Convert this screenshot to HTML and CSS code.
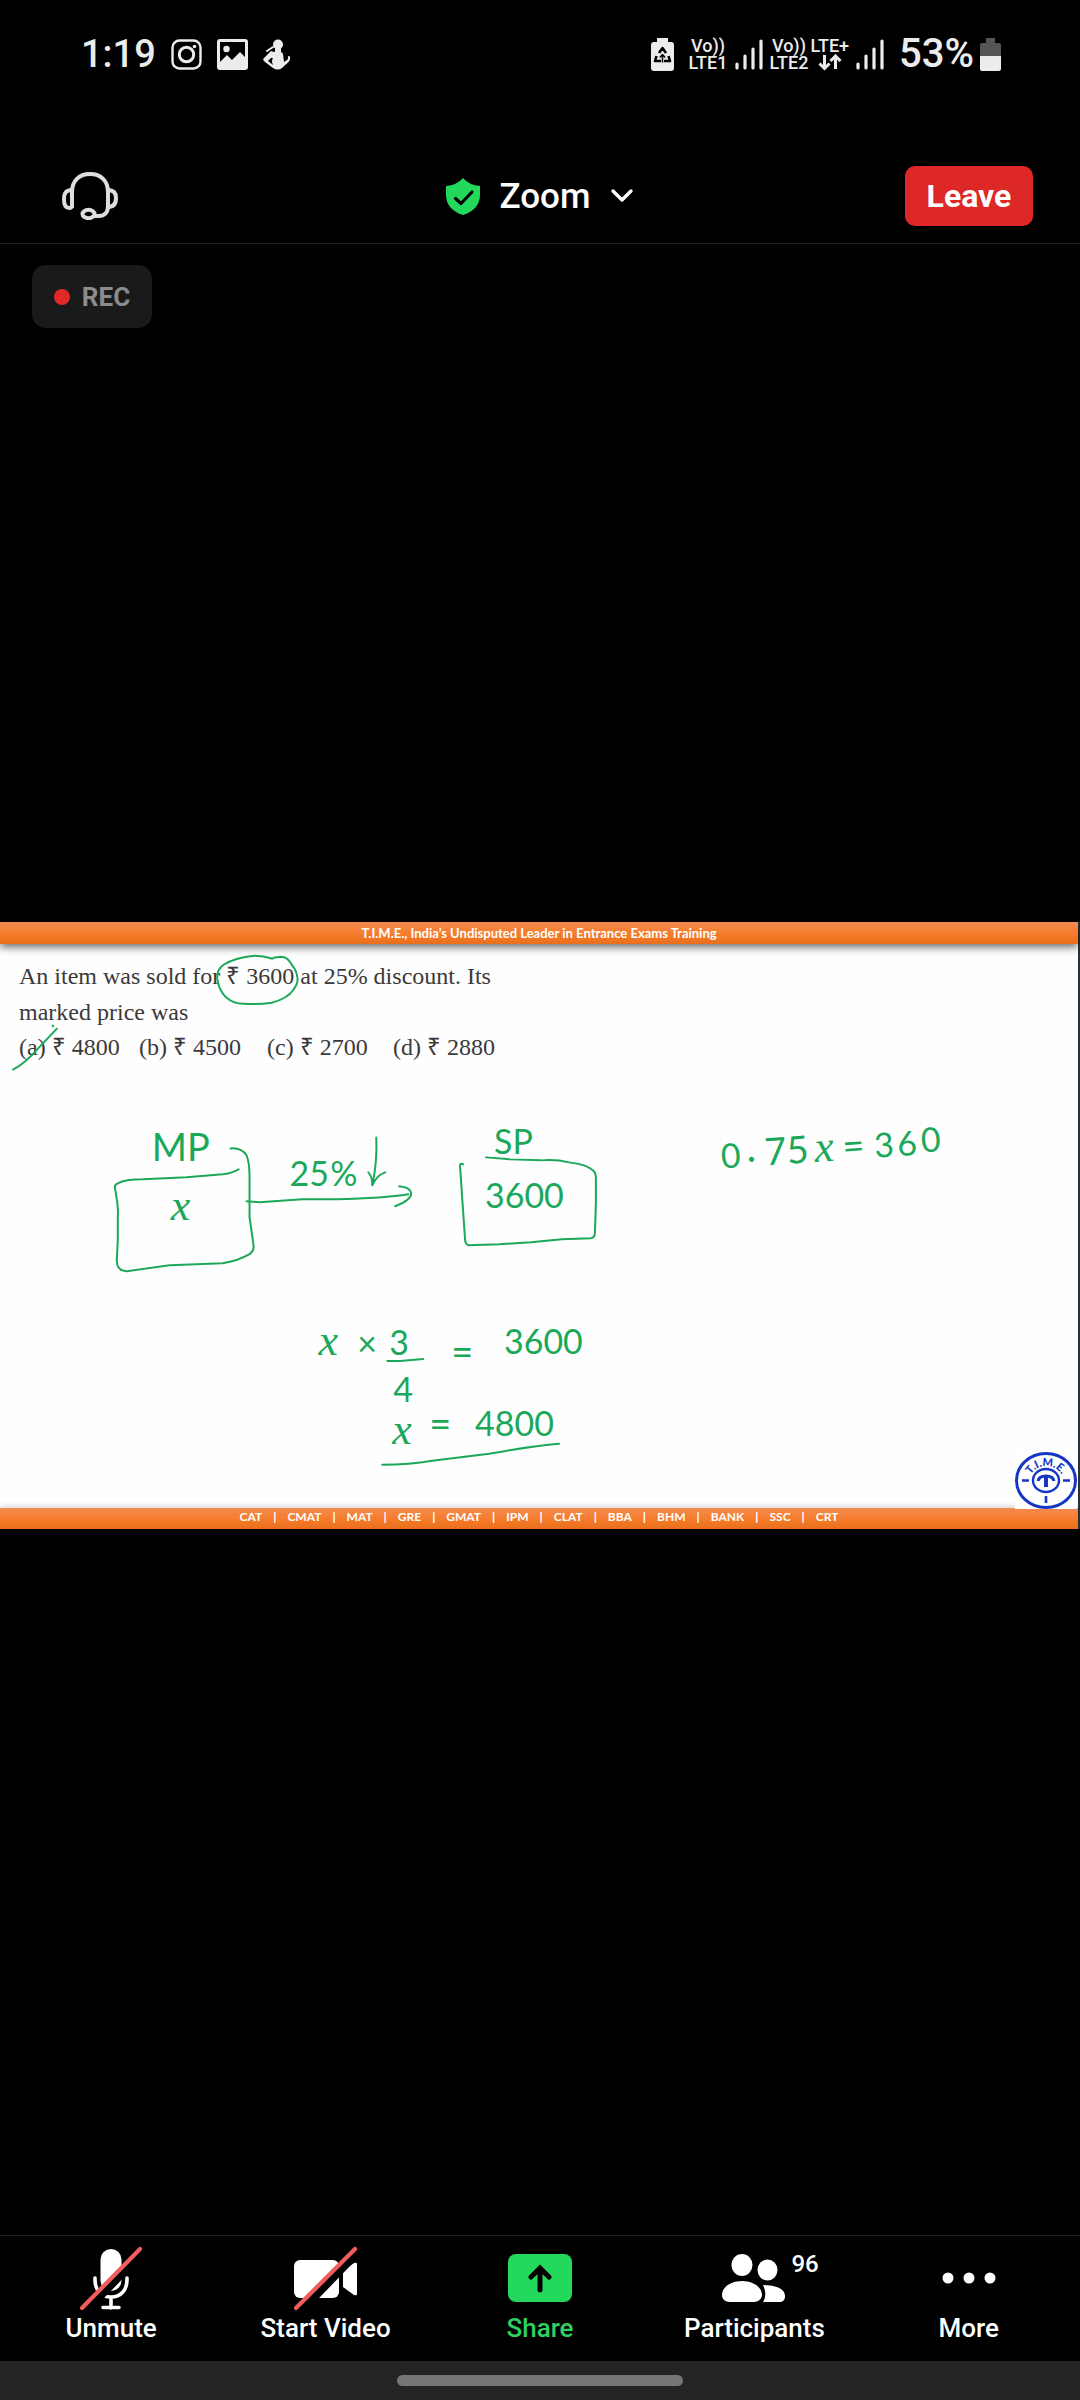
FILE: index.html
```html
<!DOCTYPE html>
<html lang="en">
<head>
<meta charset="utf-8">
<meta name="viewport" content="width=device-width, initial-scale=1">
<title>Zoom</title>
<link rel="stylesheet" href="styles.css">
</head>
<body>
<div class="status">
  <div class="status-left">
    <span class="clock">1:19</span>
    <svg class="note-icon" width="31" height="31" viewBox="0 0 31 31" fill="none" stroke="#ececec"><rect x="1.5" y="1.5" width="28" height="28" rx="7" stroke-width="2.4"/><circle cx="15.500" cy="15.500" r="7.200" stroke-width="3"/><circle cx="23.500" cy="7.500" r="1.800" fill="#ececec" stroke="none"/></svg>
    <svg class="note-icon" width="31" height="31" viewBox="0 0 31 31"><rect x="1.500" y="1.500" width="28" height="28" rx="1.500" fill="none" stroke="#ececec" stroke-width="3"/><circle cx="9.500" cy="10" r="3.200" fill="#ececec"/><path d="M2 24 10 16l5 5 8-8 7 7v10H2z" fill="#ececec"/></svg>
    <svg class="note-icon" width="28" height="31" viewBox="0 0 28 31" fill="#ececec"><circle cx="15" cy="5.500" r="5"/><path d="M12 9h6v5h-6z"/><path fill-rule="evenodd" d="M11 13q7-2 9 2l1 8 6-4-1 3-7 7q-4 3-9 0l-8-6q-3-2-1-4l7-7zM8 19l-3 3 5 4q-2-4 0-7z"/><path d="M4 12 10 8M20 26q7-4 6-8" stroke="#ececec" stroke-width="2" stroke-linecap="round" fill="none"/></svg>
  </div>
  <div class="status-right">
    <svg class="saver" width="23" height="33" viewBox="0 0 23 33"><path d="M6 0h11v4h3q3 0 3 3v23q0 3-3 3H3q-3 0-3-3V7q0-3 3-3h3z" fill="#ececec"/><path d="M8 15l3.500-5 3.500 5M5.500 18 4 23h6M17.500 18l1.500 5h-6" fill="none" stroke="#000" stroke-width="2.600" stroke-linejoin="round"/><path d="M11.500 16.500v8M8.800 19.500l2.700-3 2.700 3" stroke="#000" stroke-width="1.500" fill="none"/></svg>
    <div class="stack"><span>Vo))</span><span>LTE1</span></div>
    <svg class="signal" width="28" height="31" viewBox="0 0 28 31" stroke="#ececec" stroke-width="3.200" stroke-linecap="round"><path d="M2 25v4M10 17v12M18 10v19M26 2v27"/></svg>
    <div class="stack"><span>Vo))</span><span>LTE2</span></div>
    <div class="stack stack-next"><span>LTE+</span><svg width="24" height="17" viewBox="0 0 24 17" fill="none" stroke="#ececec" stroke-width="3"><path d="M6.500 1v13M1.500 9.500l5 5 5-5M17.500 15V2M12.500 7l5-5 5 5"/></svg></div>
    <svg class="signal" width="28" height="31" viewBox="0 0 28 31" stroke="#ececec" stroke-width="3.200" stroke-linecap="round"><path d="M2 25v4M10 17v12M18 10v19M26 2v27"/></svg>
    <span class="percent">53%</span>
    <svg width="21" height="33" viewBox="0 0 21 33"><path d="M6 0h9v5h4q2 0 2 2v11H0V7q0-2 2-2h4z" fill="#555"/><path d="M0 18h21v13q0 2-2 2H2q-2 0-2-2z" fill="#ececec"/></svg>
  </div>
</div>
<header class="bar">
  <button class="plain audio" aria-label="Audio"><svg width="56" height="48" viewBox="0 0 56 48" fill="none" stroke="#dedede" stroke-width="4"><path d="M10 36V20C10 9 17 2 28 2s18 7 18 18v14c0 7-4 10-9 10h-5"/><path d="M10 18C4 18 2 21 2 27s2 9 5 9 3-1 3-3M46 18c6 0 8 3 8 8s-2 9-8 9"/><ellipse cx="26.500" cy="42" rx="6" ry="4.200"/></svg></button>
  <button class="plain meeting">
    <svg width="34" height="37" viewBox="0 0 34 37"><path d="M17 0q6 7 17 8v9c0 10-7 17-17 20C7 34 0 27 0 17V8q11-1 17-8z" fill="#23d95b"/><path d="M9.500 20.500l5.500 5L26 14" fill="none" stroke="#000" stroke-width="3.200" stroke-linecap="round" stroke-linejoin="round"/></svg>
    <span>Zoom</span>
    <svg width="24" height="16" viewBox="0 0 24 16"><path d="M3 3l9 9 9-9" fill="none" stroke="#fff" stroke-width="3.400" stroke-linecap="round" stroke-linejoin="round"/></svg>
  </button>
  <button class="leave">Leave</button>
</header>
<main class="stage">
  <div class="rec"><i class="rec-dot"></i>REC</div>
  <section class="slide">
    <div class="slide-head">T.I.M.E., India’s Undisputed Leader in Entrance Exams Training</div>
    <div class="question">
      <p>An item was sold for ₹ 3600 at 25% discount. Its<br>marked price was</p>
      <div class="options"><span>(a) ₹ 4800</span><span>(b) ₹ 4500</span><span>(c) ₹ 2700</span><span>(d) ₹ 2880</span></div>
    </div>
    <div class="slide-foot"><span>CAT</span><b>|</b><span>CMAT</span><b>|</b><span>MAT</span><b>|</b><span>GRE</span><b>|</b><span>GMAT</span><b>|</b><span>IPM</span><b>|</b><span>CLAT</span><b>|</b><span>BBA</span><b>|</b><span>BHM</span><b>|</b><span>BANK</span><b>|</b><span>SSC</span><b>|</b><span>CRT</span></div>
    <svg class="logo" width="62" height="57" viewBox="0 0 62 57">
      <defs><path id="arc" d="M14 29A17 15 0 0 1 48 29"/></defs>
      <rect width="62" height="57" fill="#fff"/>
      <g fill="none" stroke="#1537c4"><ellipse cx="31" cy="28.500" rx="29.500" ry="27" stroke-width="3"/><ellipse cx="31" cy="28.500" rx="13" ry="11.500" stroke-width="2.400"/><path d="M7 28.500h7M48 28.500h7M31 44v7" stroke-width="2.600"/><path d="M23 29q1-5 8-5t8 5" stroke-width="3"/><path d="M31 24v11" stroke-width="4"/></g>
      <text class="logo-text"><textPath href="#arc" startOffset="50%" text-anchor="middle">T.I.M.E.</textPath></text>
    </svg>
    <svg class="ink" viewBox="0 0 1080 607">
      <g class="stroke">
        <path d="M273 36Q264 33 255 33 235 35 224 42 216 48 218 58 220 69 227 75 234 81 244 81 260 82 272 80 288 76 294 67 299 60 298 55 297 48 293 43 288 34 282 34L274 35"/>
        <path d="M57 106 38 126Q25 141 13 147M53 103v1"/>
        <path d="M239 247Q232 251 223 252L187 255 143 257Q125 257 118 261 115 262 115 265 119 285 118 295V318L117 338Q117 349 127 349L170 343 223 341Q238 339 250 332 255 328 254 323L250 295V255Q250 240 247 233 242 225 231 226"/>
        <path d="M247 279 260 280 303 277 337 277Q385 276 409 272M400 264Q411 265 412 271 412 278 396 284"/>
        <path d="M377 215Q378 240 373 263M369 250Q373 254 373 263 378 252 386 250"/>
        <path d="M487 235 511 237 542 238Q558 237 570 240 588 242 594 248 597 250 597 256V281L596 311Q596 315 592 316L563 317 532 320 500 322 469 323Q466 321 466 318L463 275 461 245Q460 240 464 242"/>
        <path d="M388 439 401 439 424 437M383 543Q410 543 433 539L490 532Q535 524 560 522"/>
      </g>
      <g class="hand">
        <text class="tall" x="152" y="239">MP</text><text class="unknown" x="171" y="298">x</text>
        <text x="290" y="264">25</text><text x="331" y="264">%</text>
        <text x="495" y="232">SP</text><text x="486" y="286">3600</text>
        <g transform="rotate(-4 725 246)"><text x="723" y="246">0</text><text x="749" y="249">·</text><text class="tall" x="767" y="246">75</text><text class="unknown" x="817" y="246">x</text><text class="tall" x="845" y="246">=</text><text x="877" y="246">3</text><text x="900" y="246">6</text><text x="924" y="244">0</text></g>
        <text class="unknown" x="319" y="433">x</text><text x="358" y="434">×</text><text x="390" y="433">3</text><text x="394" y="480">4</text>
        <text class="tall" x="452" y="444">=</text><text x="505" y="432">3600</text>
        <text class="unknown" x="393" y="522">x</text><text class="tall" x="430" y="516">=</text><text x="476" y="514">4800</text>
      </g>
    </svg>
  </section>
</main>
<nav class="tools">
  <button class="tool"><span class="pic"><svg width="64" height="64" viewBox="0 0 64 64"><g fill="none" stroke="#fff" stroke-width="3.600" stroke-linecap="round"><path d="M16 32v2c0 10 6 17 16 17s16-7 16-17v-2M32 51v11M24 61.500h16"/></g><rect x="21.500" y="3" width="21" height="42" rx="10.500" fill="#fff"/><path d="M6 66 64 6" stroke="#000" stroke-width="8"/><path d="M3 62 61 3" stroke="#f05d5b" stroke-width="4.200" stroke-linecap="round"/></svg></span>Unmute</button>
  <button class="tool"><span class="pic"><svg width="64" height="64" viewBox="0 0 64 64"><rect y="14" width="45" height="38" rx="6" fill="#fff"/><path d="M49 25 60 17q3-1 3 1v30q0 2-3 1l-11-8z" fill="#fff"/><path d="M6 66 64 6" stroke="#000" stroke-width="8"/><path d="M2 62 61 3" stroke="#f05d5b" stroke-width="4.200" stroke-linecap="round"/></svg></span>Start Video</button>
  <button class="tool share"><span class="pic"><svg width="64" height="48" viewBox="0 0 64 48"><rect width="64" height="48" rx="8" fill="#23d95b"/><path d="M32 36V15M23 23l9-9 9 9" fill="none" stroke="#000" stroke-width="5" stroke-linecap="round"/></svg></span>Share</button>
  <button class="tool"><span class="pic"><svg width="64" height="48" viewBox="0 0 64 48" fill="#fff"><ellipse cx="20" cy="11" rx="10.500" ry="11"/><ellipse cx="45.500" cy="16" rx="10" ry="10.500"/><path d="M20 27c11 0 20 6 20 14 0 4-4 7-8 7H8c-5 0-8-3-8-7 0-8 9-14 20-14zM41 31c13 0 22 4 22 11 0 4-2 6-6 6H41c3-5 3-11 0-17z"/></svg><span class="count">96</span></span>Participants</button>
  <button class="tool"><span class="pic"><svg width="54" height="12" viewBox="0 0 54 12" fill="#fff"><circle cx="6" cy="6" r="5.500"/><circle cx="27" cy="6" r="5.500"/><circle cx="48" cy="6" r="5.500"/></svg></span>More</button>
</nav>
<div class="gesture"><span class="handle"></span></div>
</body>
</html>
```
FILE: styles.css
```css
* { box-sizing: border-box; }
body {
  margin: 0;
  min-height: 100vh;
  display: flex;
  flex-direction: column;
  background: #000;
  color: #fff;
  font-family: Roboto, "Noto Sans", sans-serif;
}
svg { display: block; flex: none; }
button { font: inherit; color: inherit; border: 0; padding: 0; cursor: pointer; }
.plain { background: none; }

.status {
  height: 108px;
  padding: 0 79px 0 81px;
  display: flex;
  align-items: center;
  justify-content: space-between;
  color: #ececec;
  font-weight: 500;
}
.status-left, .status-right { display: flex; align-items: center; }
.status-left { gap: 15px; }
.clock, .percent { font-size: 40px; line-height: 48px; }
.clock { font-size: 38px; }
.stack {
  display: flex;
  flex-direction: column;
  align-items: center;
  font-size: 18px;
  line-height: 17px;
}
.stack-next { margin-left: 2px; }
.saver { margin-right: 15px; }
.signal { margin: 0 7px; }
.percent { margin: 0 6px 0 8px; }

.bar {
  height: 136px;
  padding: 41px 47px 0 62px;
  border-bottom: 1px solid #1f1f1f;
  display: grid;
  grid-template-columns: 1fr auto 1fr;
  align-items: center;
}
.audio { justify-self: start; }
.meeting {
  display: flex;
  align-items: center;
  gap: 20px;
  margin-right: 15px;
  font-size: 35px;
  font-weight: 500;
}
.leave {
  justify-self: end;
  width: 128px;
  height: 60px;
  border-radius: 10px;
  background: #de2828;
  font-size: 32px;
  font-weight: 700;
}

.stage {
  flex: 1;
  position: relative;
  display: flex;
  align-items: center;
  padding-bottom: 28px;
}
.rec {
  position: absolute;
  left: 32px;
  top: 21px;
  width: 120px;
  height: 63px;
  border-radius: 14px;
  background: #1a1a1a;
  color: #8c8c8c;
  display: flex;
  align-items: center;
  justify-content: center;
  gap: 12px;
  font-size: 26px;
  font-weight: 700;
}
.rec-dot { width: 16px; height: 16px; border-radius: 50%; background: #e02828; }

.slide {
  position: relative;
  width: 100%;
  aspect-ratio: 16 / 9;
  display: flex;
  flex-direction: column;
  background: #fefefe;
  border-right: 2px solid #26323a;
}
.slide-head, .slide-foot {
  background: linear-gradient(#f58b50, #f57a28 60%, #e96f1c);
  font-family: Lato, "Open Sans", sans-serif;
  font-size: 12px;
  font-weight: 700;
}
.slide-head {
  height: 22px;
  line-height: 23px;
  text-align: center;
  font-size: 13px;
  box-shadow: 0 3px 8px rgba(0, 0, 0, .6);
}
.question {
  flex: 1;
  padding: 14px 19px;
  color: #3c393a;
  font-family: "Liberation Serif", serif;
  font-size: 24px;
  line-height: 36px;
}
.question p { margin: 0; }
.options { display: grid; grid-template-columns: 120px 128px 126px auto; line-height: 34px; }
.slide-foot {
  height: 21px;
  line-height: 17px;
  display: flex;
  justify-content: center;
  gap: 11px;
  box-shadow: 0 -2px 5px rgba(0, 0, 0, .15);
}
.logo { position: absolute; right: 1px; bottom: 20px; }
.logo-text { font: 900 11px Lato, sans-serif; fill: #1537c4; }
.ink { position: absolute; left: 0; top: 0; width: 100%; height: 100%; }
.stroke { fill: none; stroke: #1ba85a; stroke-width: 2; stroke-linecap: round; stroke-linejoin: round; }
.hand { fill: #1ba85a; font-family: Lato, sans-serif; font-size: 34px; font-weight: 400; }
.tall { font-size: 38px; }
.unknown { font-family: "Liberation Serif", serif; font-size: 44px; font-style: italic; }

.tools {
  height: 126px;
  padding: 10px 4px 0;
  border-top: 1px solid #1f1f1f;
  display: grid;
  grid-template-columns: repeat(5, 1fr);
}
.tool {
  background: none;
  display: flex;
  flex-direction: column;
  align-items: center;
  font-size: 26px;
  font-weight: 500;
  line-height: 36px;
}
.pic { position: relative; height: 64px; display: flex; align-items: center; }
.share { color: #2fd060; }
.count { position: absolute; left: 69px; top: 4px; font-size: 24px; line-height: 28px; }

.gesture { height: 39px; background: #242424; display: flex; align-items: center; justify-content: center; }
.handle { width: 286px; height: 11px; border-radius: 6px; background: #757575; }
```
